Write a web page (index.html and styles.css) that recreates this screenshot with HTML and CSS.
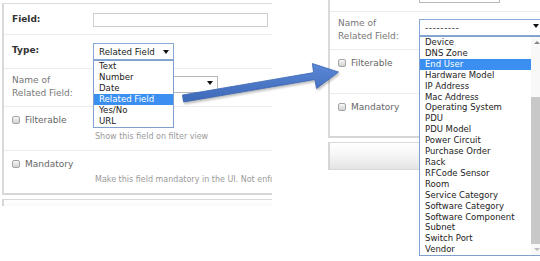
FILE: index.html
```html
<!DOCTYPE html>
<html>
<head>
<meta charset="utf-8">
<link rel="stylesheet" href="styles.css">
</head>
<body>
<div class="stage">
  <div class="shot shot-left">
    <div class="sheet">
      <div class="panel">
        <div class="row row-field">
          <div class="lbl strong">Field:</div>
          <div class="val"><span class="input"></span></div>
        </div>
        <div class="row row-type">
          <div class="lbl strong">Type:</div>
          <div class="val">
            <div class="select sel-type focused"><span>Related Field</span><i class="caret"></i></div>
            <ul class="list list-type">
              <li>Text</li>
              <li>Number</li>
              <li>Date</li>
              <li class="on">Related Field</li>
              <li>Yes/No</li>
              <li>URL</li>
            </ul>
          </div>
        </div>
        <div class="row row-name">
          <div class="lbl">Name of<br>Related Field:</div>
          <div class="val">
            <div class="select sel-name"><span></span><i class="caret"></i></div>
          </div>
        </div>
        <div class="row row-check row-filter">
          <div class="check"><span class="box"></span>Filterable</div>
          <div class="help">Show this field on filter view</div>
        </div>
        <div class="row row-check row-mand">
          <div class="check"><span class="box"></span>Mandatory</div>
          <div class="help">Make this field mandatory in the UI. Not enforced by the API.</div>
        </div>
      </div>
      <div class="footer"></div>
    </div>
  </div>

  <div class="shot shot-right">
    <div class="sheet">
      <div class="panel">
        <div class="row row-field">
          <div class="lbl strong">Field:</div>
          <div class="val"><span class="input"></span></div>
        </div>
        <div class="row row-type">
          <div class="lbl strong">Type:</div>
          <div class="val">
            <div class="select sel-type"><span>Related Field</span><i class="caret"></i></div>
          </div>
        </div>
        <div class="row row-name">
          <div class="lbl">Name of<br>Related Field:</div>
          <div class="val">
            <div class="select sel-name focused"><span class="dashes">---------</span><i class="caret"></i></div>
            <div class="list list-name">
              <ul>
                <li>Device</li>
                <li>DNS Zone</li>
                <li class="on">End User</li>
                <li>Hardware Model</li>
                <li>IP Address</li>
                <li>Mac Address</li>
                <li>Operating System</li>
                <li>PDU</li>
                <li>PDU Model</li>
                <li>Power Circuit</li>
                <li>Purchase Order</li>
                <li>Rack</li>
                <li>RFCode Sensor</li>
                <li>Room</li>
                <li>Service Category</li>
                <li>Software Category</li>
                <li>Software Component</li>
                <li>Subnet</li>
                <li>Switch Port</li>
                <li>Vendor</li>
              </ul>
              <div class="scroll">
                <span class="sb-btn sb-up"></span>
                <span class="sb-thumb"></span>
                <span class="sb-btn sb-down"></span>
              </div>
            </div>
          </div>
        </div>
        <div class="row row-check row-filter">
          <div class="check"><span class="box"></span>Filterable</div>
          <div class="help">Show this field on filter view</div>
        </div>
        <div class="row row-check row-mand">
          <div class="check"><span class="box"></span>Mandatory</div>
          <div class="help">Make this field mandatory in the UI. Not enforced by the API.</div>
        </div>
      </div>
      <div class="footer"></div>
    </div>
  </div>

  <svg class="arrow" width="540" height="261" viewBox="0 0 540 261">
    <defs>
      <linearGradient id="ag" x1="0" y1="0" x2="0" y2="1">
        <stop offset="0" stop-color="#5a88d6"/>
        <stop offset="1" stop-color="#3d68b8"/>
      </linearGradient>
    </defs>
    <polygon points="182.4,95 313.7,72.6 312.3,63.5 338.5,72 316.5,88.5 314.9,79.5 183.6,102" fill="url(#ag)" stroke="#3a66b4" stroke-width="0.8" stroke-linejoin="round"/>
  </svg>
</div>
</body>
</html>
```

FILE: styles.css
```css
* { box-sizing: border-box; margin: 0; padding: 0; }
html, body { width: 540px; height: 261px; overflow: hidden; background: #fff; }
body { font-family: "DejaVu Sans", Verdana, sans-serif; color: #333; }

.stage { position: relative; display: flex; align-items: flex-start; height: 261px; }

.shot { position: relative; flex: none; overflow: hidden; }
.shot-left { width: 272px; height: 206px; padding: 3px 0 0 2px; }
.shot-right { width: 214px; height: 261px; margin-left: 54px; padding-left: 2px; }
.shot-right .sheet { margin-top: -54px; }

.sheet { width: 300px; }

.panel {
  width: 300px;
  background: #fff;
  border: 1px solid #dcdcdc;
  border-left: 2px solid #d9d9d9;
  border-bottom: 2px solid #d6d6d6;
}

.footer {
  margin-top: 4px;
  height: 28px;
  border: 1px solid #d8d8d8;
  border-left: 2px solid #d6d6d6;
  background: linear-gradient(#ffffff, #f6f6f6 45%, #e4e4e4);
}

.row { display: flex; padding-left: 8px; border-bottom: 1px solid #ececec; }
.row:last-child { border-bottom: 0; }
.row-field { height: 31px; }
.row-type { height: 34px; }
.row-name { height: 38px; }
.row-filter { height: 44px; }
.row-mand { height: 42px; }

.lbl { width: 81px; flex: none; font-size: 9px; line-height: 13px; color: #777; padding-top: 5px; }
.lbl.strong { font-weight: bold; color: #333; line-height: 14px; padding-top: 8px; }

.val { position: relative; align-self: flex-start; }
.row-field .val { padding-top: 9px; }
.row-type .val { padding-top: 8px; }
.row-name .val { padding-top: 7px; }

.input { display: block; width: 175px; height: 14px; border: 1px solid #cfcfcf; background: #fff; }

.select {
  display: flex; align-items: center; justify-content: space-between;
  height: 17px; padding: 0 4px 0 5px;
  border: 1px solid #b9b9b9; background: #fff;
  font-size: 8.7px; color: #222;
}
.select.focused { border-color: #86a8d4; }
.sel-type { width: 81px; }
.sel-name { width: 125px; }
.sel-name .caret { margin-bottom: 4px; }
.dashes { letter-spacing: 0.7px; padding-top: 1px; }
.caret {
  display: block; width: 0; height: 0;
  border-left: 3px solid transparent; border-right: 3px solid transparent;
  border-top: 4px solid #111;
}

.list {
  position: absolute; left: 0; top: 100%; z-index: 2;
  list-style: none; background: #fff;
  border: 1px solid #7f9fcf;
  font-size: 8.6px; color: #222;
}
.list li { padding-left: 5px; white-space: nowrap; }
.list li.on { background: #3a8ff0; color: #fff; }
.list-type { width: 81px; line-height: 11px; }
.list-name { width: 125px; display: flex; line-height: 10.9px; font-size: 8.5px; }
.list-name ul { list-style: none; flex: 1; }
.list-name .scroll { width: 12px; flex: none; display: flex; flex-direction: column; align-items: stretch; background: #f8f8f8; }

.sb-btn { display: flex; justify-content: center; align-items: center; height: 11px; }
.sb-up::after, .sb-down::after {
  content: ""; width: 0; height: 0;
  border-left: 3px solid transparent; border-right: 3px solid transparent;
}
.sb-up::after { border-bottom: 3px solid #888; }
.sb-down::after { border-top: 3px solid #bbb; }
.sb-thumb { margin-top: 49px; flex: 1; background: #c8c8c8; }
.sb-down { margin-top: auto; }

.row-check { flex-direction: column; }
.check { display: flex; align-items: center; height: 13px; margin-top: 6px; font-size: 9px; color: #666; }
.box {
  width: 8px; height: 8px; margin-right: 5px; border-radius: 2px;
  border: 1px solid #a5a5a5;
  background: linear-gradient(#f6f6f6, #d2d2d2);
}
.help { margin-left: 83px; font-size: 8px; line-height: 11px; color: #9a9a9a; white-space: nowrap; }
.row-filter .help { margin-top: 5px; }
.row-mand .help { margin-top: 4px; }

.arrow {
  position: absolute; left: 0; top: 0; pointer-events: none; z-index: 5;
  filter: drop-shadow(1px 2px 1px rgba(0, 0, 0, 0.25));
}
```
